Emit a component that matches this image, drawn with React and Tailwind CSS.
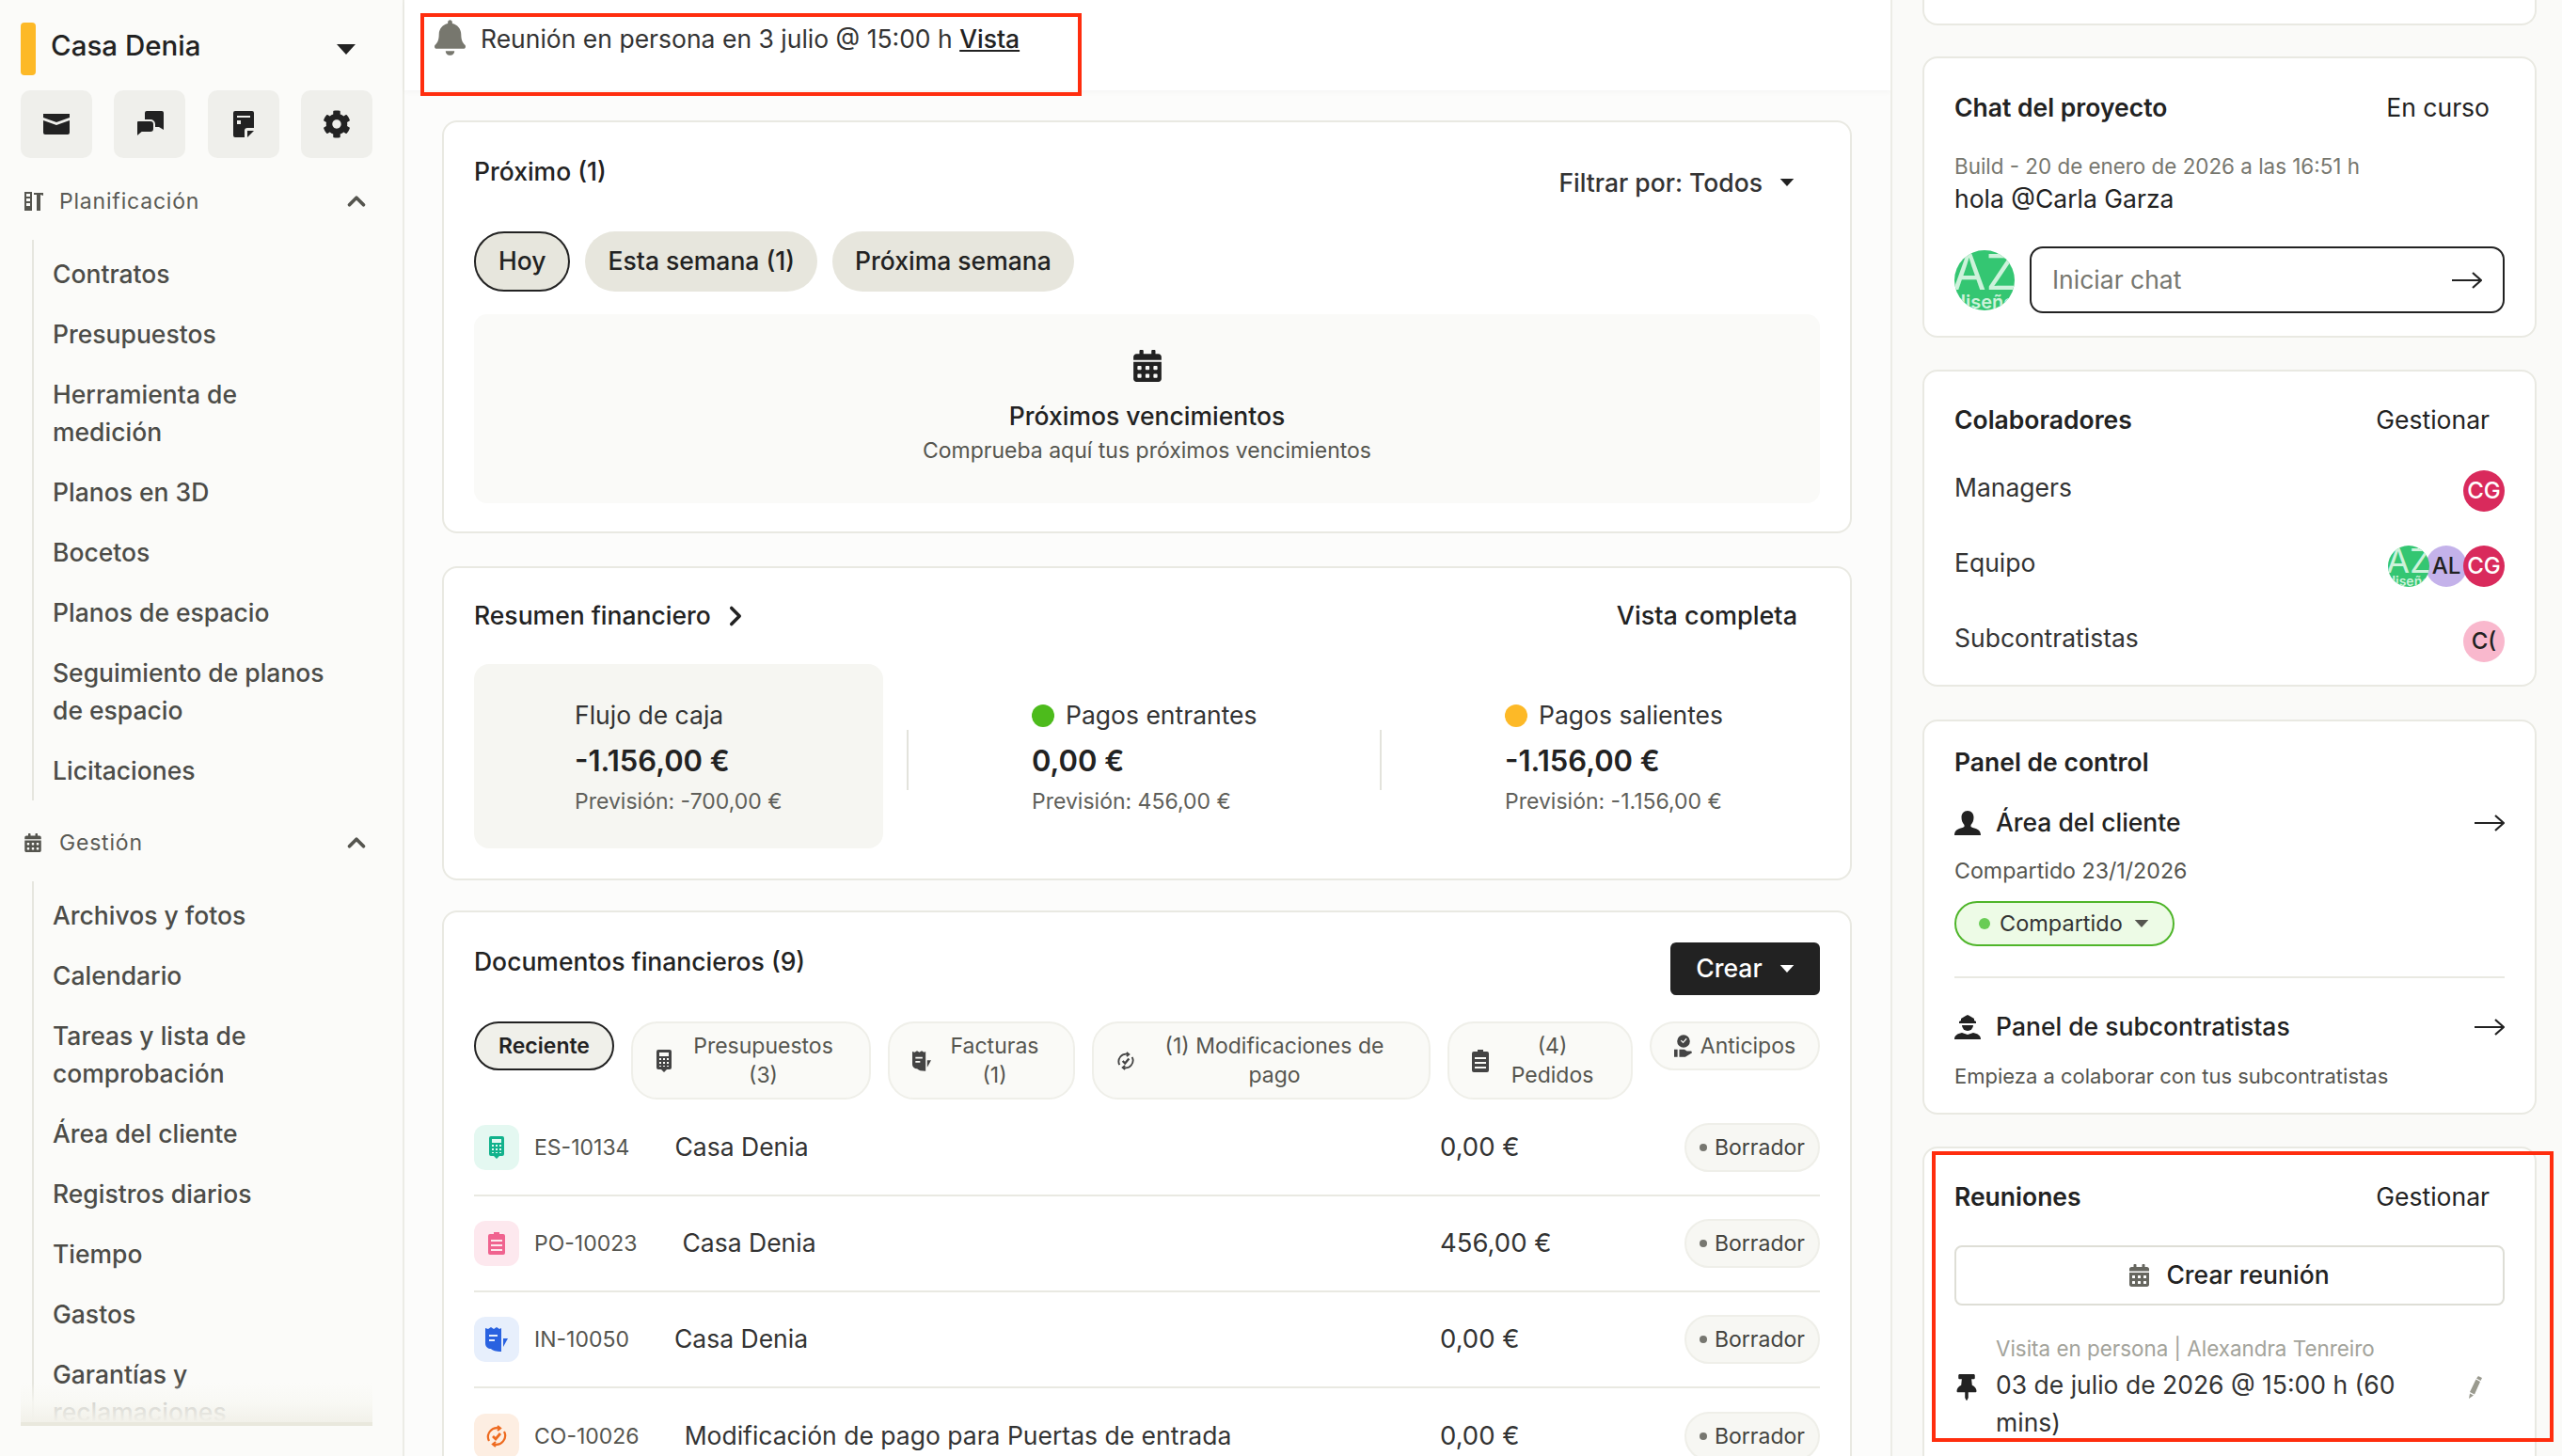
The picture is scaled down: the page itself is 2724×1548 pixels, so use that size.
import React from "react";
import { FaCog, FaBell, FaCalendarAlt, FaThumbtack } from "react-icons/fa";
import { ChevronUp, ChevronRight } from "lucide-react";

const Tri = ({ className = "" }) => (
  <svg viewBox="0 0 20 11" className={className} fill="currentColor"><path d="M0 0h20L10 11z" /></svg>
);

const Envelope = () => (
  <svg viewBox="0 0 28 22" className="w-[28px] h-[22px]" fill="#222">
    <path d="M0 0h28v4L14 9 0 4z" />
    <path d="M0 7l14 5 14-5v13a2 2 0 0 1-2 2H2a2 2 0 0 1-2-2z" />
  </svg>
);
const Chats = () => (
  <svg viewBox="0 0 29 28" className="w-[29px] h-[28px]">
    <path fill="#222" d="M9 2a2 2 0 0 1 2-2h16a2 2 0 0 1 2 2v18l-5-3H11a2 2 0 0 1-2-2z" />
    <path fill="#222" stroke="#efefeb" strokeWidth="2" d="M0 12a2 2 0 0 1 2-2h13a4 4 0 0 1 4 4v5a4 4 0 0 1-4 4H6l-6 5z" />
  </svg>
);
const Note = () => (
  <svg viewBox="0 0 22 28" className="w-[22px] h-[28px]" fill="#222">
    <path fillRule="evenodd" d="M2 0h18a2 2 0 0 1 2 2v16h-7a3 3 0 0 0-3 3v7H2a2 2 0 0 1-2-2V2a2 2 0 0 1 2-2zM4 5v2h14V5zM4 10v4h4v-4z" />
    <path d="M15 21h7l-7 7z" />
  </svg>
);
const PlanIcon = () => (
  <svg viewBox="0 0 20 20" className="w-[20px] h-[20px]" fill="#55554f">
    <path fillRule="evenodd" d="M0 0h8v20H0zM2 2v3h4V2zM2 7v3h4V7zM2 12v3h4v-3z" />
    <path d="M10 1h10v3l-3-1v17h-4V3h-3z" />
  </svg>
);
const CalcIcon = ({ c }) => (
  <svg viewBox="0 0 16 24" className="w-[18px] h-[24px]" fill={c}>
    <path fillRule="evenodd" d="M2 0h12a2 2 0 0 1 2 2v17a2 2 0 0 1-2 2h-3l-3 3-3-3H2a2 2 0 0 1-2-2V2a2 2 0 0 1 2-2zM3 3v4h10V3zM3 9v2h2V9zM7 9v2h2V9zM11 9v2h2V9zM3 13v2h2v-2zM7 13v2h2v-2zM11 13v2h2v-2zM3 17v1h2v-1zM7 17v1h2v-1zM11 17v1h2v-1z" />
  </svg>
);
const ClipIcon = ({ c }) => (
  <svg viewBox="0 0 18 24" className="w-[18px] h-[24px]" fill={c}>
    <path fillRule="evenodd" d="M6 0h6v2h4a2 2 0 0 1 2 2v18a2 2 0 0 1-2 2H2a2 2 0 0 1-2-2V4a2 2 0 0 1 2-2h4zM3 8v2h12V8zM3 13v2h12v-2zM3 18v2h12v-2z" />
  </svg>
);
const InvoiceIcon = ({ c, cls = "w-[24px] h-[26px]" }) => (
  <svg viewBox="0 0 24 26" className={cls} fill={c}>
    <path fillRule="evenodd" d="M0 1l3 1 3-2 3 2 3-2 3 2 2-1v25c-6 0-9-1-11-3-3 0-6-2-6-6zM4 8v2h9V8zM4 13v2h6v-2z" />
    <path d="M19 12h5l-5 9z" />
  </svg>
);
const CycleIcon = ({ c, cls = "w-[24px] h-[24px]" }) => (
  <svg viewBox="0 0 24 24" className={cls} fill="none" stroke={c} strokeWidth="2.2">
    <path d="M4 17a9.500 9.500 0 0 1 11-13.500" />
    <path d="M20 7a9.500 9.500 0 0 1-11 13.500" />
    <path d="M13 1l3 2.500-3 2.500M11 18l-3 2.500 3 2.500" />
    <path d="M8 12l3 3 5-6" strokeWidth="2.800" />
  </svg>
);
const HandIcon = ({ c }) => (
  <svg viewBox="0 0 22 26" className="w-[20px] h-[24px]" fill={c}>
    <path fillRule="evenodd" d="M11 0a7.500 7.500 0 1 1 0 15 7.500 7.500 0 0 1 0-15zM7.500 7l3 3 4.500-5-1-1-3.500 4-2-2z" />
    <path d="M0 17h4v9H0zM6 17h6l3 2h5l1 2-8 5H6z" />
  </svg>
);
const PersonIcon = () => (
  <svg viewBox="0 0 28 26" className="w-[28px] h-[26px]" fill="#222">
    <path d="M14 0c4 0 6.500 3 6.500 7 0 3-1 6-3 8v2l2 1c5 1 8.500 3 8.500 8H0c0-5 3.500-7 8.500-8l2-1v-2c-2-2-3-5-3-8 0-4 2.500-7 6.500-7z" />
  </svg>
);
const WorkerIcon = () => (
  <svg viewBox="0 0 28 26" className="w-[28px] h-[26px]" fill="#222">
    <path d="M14 0l2 1 5 3v2l2 1v2H5V7l2-1V4l5-3z" />
    <path d="M8 11h12a6 6 0 0 1-12 0z" />
    <path d="M0 26c0-4 3-6 8-7l6 2 6-2c5 1 8 3 8 7z" />
  </svg>
);
const Pencil = () => (
  <svg viewBox="0 0 14 24" className="w-[14px] h-[24px] mr-[24px] shrink-0" fill="#9a9a8f">
    <path d="M10 0l4 2-1.500 3L8 2.500zM7.500 3.500L12 6 6 19.500 1 17zM1 18.500l4 2L0 24z" />
  </svg>
);

const Avatar = ({ bg, color = "text-white", text, extra = "" }) => (
  <div className={`w-[44px] h-[44px] rounded-full flex items-center justify-center shrink-0 overflow-hidden font-medium text-[24px] ${bg} ${color} ${extra}`}>{text}</div>
);
const AZ = ({ big }) => (
  <div className={`relative rounded-full bg-[#34c672] overflow-hidden shrink-0 text-[#cdf2db] ${big ? "w-[64px] h-[64px]" : "w-[44px] h-[44px]"}`}>
    <span className={`absolute left-1/2 -translate-x-1/2 text-center font-normal whitespace-nowrap ${big ? "top-[-4px] text-[52px] leading-[56px]" : "top-[-3px] text-[36px] leading-[38px]"}`}>AZ</span>
    <span className={`absolute left-1/2 -translate-x-1/2 text-center font-semibold whitespace-nowrap ${big ? "top-[44px] text-[20px] leading-[22px]" : "top-[30px] text-[14px] leading-[15px]"}`}>diseño</span>
  </div>
);

const Card = ({ className = "", children }) => (
  <div className={`bg-white border-2 border-[#e9e9e2] rounded-[16px] ${className}`}>{children}</div>
);

const NavItem = ({ children }) => (
  <div className="py-3 text-[26.500px] leading-[40px] font-medium text-[#4c4c48] pr-[36px]">{children}</div>
);
const NavGroup = ({ icon, label, items, mt }) => (
  <div>
    <div className={`flex items-center h-[40px] ${mt}`}>
      <span className="w-[20px] ml-[4px] flex items-center">{icon}</span>
      <span className="ml-[17px] text-[23px] tracking-[0.8px] text-[#5a5a55] flex-1">{label}</span>
      <ChevronUp className="w-[30px] h-[30px] text-[#55554f] mr-[2px]" strokeWidth={3} />
    </div>
    <div className="mt-[21px] ml-3 border-l-2 border-[#e6e6df] pl-5 pt-[4px]">
      {items.map((t) => <NavItem key={t}>{t}</NavItem>)}
    </div>
  </div>
);

const Sidebar = () => (
  <aside className="w-[430px] shrink-0 h-full border-r-2 border-[#ecece6] bg-[#fbfbf9] pl-[22px] pr-[32px] pt-6 pb-[32px] flex flex-col">
    <div className="flex items-center h-[56px]">
      <div className="w-[16px] h-[56px] rounded-[4px] bg-[#fdb927]" />
      <div className="ml-4 flex-1 text-[29.500px] leading-[48px] font-medium text-[#222] self-start">Casa Denia</div>
      <Tri className="w-[20px] h-[11px] text-[#222] mr-[18px]" />
    </div>
    <div className="flex justify-between mt-4">
      {[<Envelope key="e" />, <Chats key="c" />, <Note key="n" />, <FaCog key="g" className="w-[30px] h-[30px] text-[#222]" />].map((ic, i) => (
        <div key={i} className="w-[76px] h-[72px] rounded-[10px] bg-[#efefeb] flex items-center justify-center">{ic}</div>
      ))}
    </div>
    <div className="relative flex-1 overflow-hidden">
      <NavGroup mt="mt-[26px]" icon={<PlanIcon />} label="Planificación" items={["Contratos", "Presupuestos", "Herramienta de medición", "Planos en 3D", "Bocetos", "Planos de espacio", "Seguimiento de planos de espacio", "Licitaciones"]} />
      <NavGroup mt="mt-[25px]" icon={<FaCalendarAlt className="w-[18px] h-[20px] text-[#55554f]" />} label="Gestión" items={["Archivos y fotos", "Calendario", "Tareas y lista de comprobación", "Área del cliente", "Registros diarios", "Tiempo", "Gastos", "Garantías y reclamaciones"]} />
      <div className="absolute left-0 right-0 bottom-0 h-[46px] border-b-4 border-[#e9e8dd] bg-gradient-to-b from-[#fbfbf9]/0 via-[#f8f8f3]/80 to-[#f2f1ea]" />
    </div>
  </aside>
);

const Pill = ({ active, children }) => (
  <div className={`h-[64px] px-[24px] rounded-full bg-[#e7e6dd] flex items-center text-[26.500px] font-medium text-[#222] ${active ? "border-2 border-[#222]" : ""}`}>{children}</div>
);
const Tab = ({ w, icon, children, h = "h-[83px]" }) => (
  <div className={`${w} ${h} border-2 border-[#efefe9] bg-[#fafaf7] text-[#55554f] pl-[24px] pr-[16px] rounded-[28px] flex items-center text-[23px] leading-[31px] text-center shrink-0`}>
    <span className="shrink-0 flex">{icon}</span>
    <span className="flex-1">{children}</span>
  </div>
);
const Stat = ({ dot, label, value, prev }) => (
  <div>
    <div className="flex items-center h-[36px] text-[26.500px] text-[#333]">
      {dot && <span className={`w-[24px] h-[24px] rounded-full mr-3 ${dot}`} />}
      {label}
    </div>
    <div className="mt-[10px] h-[40px] leading-[40px] text-[31px] font-semibold text-[#222]">{value}</div>
    <div className="mt-[7px] h-[32px] leading-[32px] text-[23px] text-[#5f5f5a]">{prev}</div>
  </div>
);
const Row = ({ tone, icon, code, name, amount, last }) => (
  <div className={`flex items-center h-[102px] shrink-0 ${last ? "" : "border-b-2 border-[#e9e9e2]"}`}>
    <div className={`w-[48px] h-[48px] rounded-[12px] flex items-center justify-center ${tone}`}>{icon}</div>
    <div className="ml-4 text-[23px] text-[#55554f]">{code}</div>
    <div className="ml-12 flex-1 text-[26.500px] text-[#333]">{name}</div>
    <div className="w-[260px] text-[27.500px] text-[#333]">{amount}</div>
    <div className="w-[144px] h-[52px] rounded-full border-2 border-[#efefe9] bg-[#f7f7f3] flex items-center justify-center text-[23px] text-[#44443f]">
      <span className="w-[8px] h-[8px] rounded-full bg-[#777770] mr-[8px]" />Borrador
    </div>
  </div>
);

const Main = () => (
  <main className="flex-1 min-w-0 h-full bg-[#fcfcfb] relative">
    <div className="h-[96px] bg-white shadow-[0_2px_6px_rgba(0,0,0,0.03)] flex items-start pl-[32px] pt-[21px]">
      <FaBell className="w-[33px] h-[38px] text-[#77776e]" />
      <div className="ml-[16px] text-[26.500px] leading-[40px] text-[#333] whitespace-nowrap">
        Reunión en persona en 3 julio @ 15:00 h <span className="underline font-medium text-[#222]">Vista</span>
      </div>
    </div>
    <div className="absolute left-[17px] top-[14px] w-[703px] h-[88px] border-4 border-[#ff2d0e]" />
    <div className="pl-[40px] pr-[41px] pt-[32px]">
      <Card className="px-[32px] pb-[30px]">
        <div className="flex items-start h-[116px] pt-[32px]">
          <div className="flex-1 text-[26.500px] leading-[40px] font-medium text-[#222]">Próximo (1)</div>
          <div className="mt-3 text-[26.500px] leading-[40px] font-medium text-[#333] flex items-center mr-[27px]">
            Filtrar por: Todos
            <Tri className="w-[16px] h-[8px] ml-[18px] text-[#222]" />
          </div>
        </div>
        <div className="flex gap-4">
          <Pill active>Hoy</Pill><Pill>Esta semana (1)</Pill><Pill>Próxima semana</Pill>
        </div>
        <div className="mt-[24px] h-[201px] rounded-[14px] bg-[#fafaf8] flex flex-col items-center pt-[38px]">
          <FaCalendarAlt className="w-[30px] h-[34px] text-[#222]" />
          <div className="mt-[16px] text-[26.500px] leading-[40px] font-medium text-[#222]">Próximos vencimientos</div>
          <div className="text-[23px] leading-[34px] text-[#55554f]">Comprueba aquí tus próximos vencimientos</div>
        </div>
      </Card>
      <Card className="mt-[35px] px-[32px] pb-[32px]">
        <div className="flex items-center justify-between mt-[31px] h-[40px]">
          <div className="flex items-center text-[26.500px] font-medium text-[#222]">
            Resumen financiero <ChevronRight className="w-[34px] h-[34px] ml-[9px] text-[#222]" strokeWidth={2.5} />
          </div>
          <div className="text-[27px] font-medium text-[#222] mr-[24px]">Vista completa</div>
        </div>
        <div className="flex items-center mt-[31px] h-[196px]">
          <div className="w-[435px] h-full rounded-[16px] bg-[#f6f6f2] pl-[107px] pt-[37px]">
            <Stat label="Flujo de caja" value="-1.156,00 €" prev="Previsión: -700,00 €" />
          </div>
          <div className="ml-[25px] w-[2px] h-[64px] bg-[#e3e3dc] mt-[8px]" />
          <div className="w-[501px] pl-[131px] mt-[2px]">
            <Stat dot="bg-[#4dbb1c]" label="Pagos entrantes" value="0,00 €" prev="Previsión: 456,00 €" />
          </div>
          <div className="w-[2px] h-[64px] bg-[#e3e3dc] mt-[8px]" />
          <div className="pl-[131px] mt-[2px]">
            <Stat dot="bg-[#fdb927]" label="Pagos salientes" value="-1.156,00 €" prev="Previsión: -1.156,00 €" />
          </div>
        </div>
      </Card>
      <Card className="mt-[32px] px-[32px] pb-[20px]">
        <div className="flex items-start justify-between mt-[32px]">
          <div className="text-[26.500px] leading-[40px] font-medium text-[#222]">Documentos financieros (9)</div>
          <div className="w-[159px] h-[56px] rounded-[6px] bg-[#222] text-white flex items-center justify-center text-[26.500px] font-medium">
            Crear <Tri className="w-[16px] h-[8px] ml-[18px] text-white" />
          </div>
        </div>
        <div className="flex justify-between items-start mt-[28px] h-[84px]">
          <div className="w-[149px] h-[52px] shrink-0 border-2 border-[#222] bg-[#f0f0ea] rounded-[28px] flex items-center justify-center text-[23px] font-semibold text-[#222]">Reciente</div>
          <Tab w="w-[255px]" icon={<CalcIcon c="#444" />}>Presupuestos<br />(3)</Tab>
          <Tab w="w-[199px]" icon={<InvoiceIcon c="#444" cls="w-[20px] h-[22px]" />}>Facturas<br />(1)</Tab>
          <Tab w="w-[360px]" icon={<CycleIcon c="#444" cls="w-[20px] h-[22px]" />}>(1) Modificaciones de<br />pago</Tab>
          <Tab w="w-[197px]" icon={<ClipIcon c="#444" />}>(4)<br />Pedidos</Tab>
          <Tab w="w-[181px]" h="h-[52px]" icon={<HandIcon c="#444" />}>Anticipos</Tab>
        </div>
        <Row tone="bg-[#e4f8f1]" icon={<CalcIcon c="#12b28c" />} code="ES-10134" name="Casa Denia" amount="0,00 €" />
        <Row tone="bg-[#fde8ee]" icon={<ClipIcon c="#f0638f" />} code="PO-10023" name="Casa Denia" amount="456,00 €" />
        <Row tone="bg-[#e7effc]" icon={<InvoiceIcon c="#2a62e0" />} code="IN-10050" name="Casa Denia" amount="0,00 €" />
        <Row tone="bg-[#fdeee2]" icon={<CycleIcon c="#ee6a1f" />} code="CO-10026" name="Modificación de pago para Puertas de entrada" amount="0,00 €" last />
      </Card>
    </div>
  </main>
);

const Arrow = () => (
  <svg viewBox="0 0 32 20" className="w-[32px] h-[20px] shrink-0" fill="none" stroke="#222" strokeWidth="2.200">
    <path d="M0 10h31M22 2l9 8-9 8" />
  </svg>
);

const Right = () => (
  <aside className="w-[714px] shrink-0 h-full border-l-2 border-[#ecece6] bg-[#fafaf8] pl-[32px] pr-[27px] relative">
    <div className="h-[27px] bg-white border-x-2 border-b-2 border-[#e9e9e2] rounded-b-[16px]" />
    <Card className="mt-[33px] px-[32px] pb-[24px]">
      <div className="mt-[32px] flex justify-between text-[26.500px] leading-[40px] text-[#222]">
        <span className="font-semibold">Chat del proyecto</span><span className="mr-[16px]">En curso</span>
      </div>
      <div className="mt-[26px] text-[22.400px] leading-[34px] text-[#77776f]">Build - 20 de enero de 2026 a las 16:51 h</div>
      <div className="text-[26.500px] leading-[34px] text-[#222]">hola @Carla Garza</div>
      <div className="mt-[34px] flex items-center">
        <AZ big />
        <div className="ml-[16px] flex-1 h-[71px] border-2 border-[#222] rounded-[14px] flex items-center pl-[22px] pr-[22px] justify-between">
          <span className="text-[26.500px] text-[#77776f]">Iniciar chat</span>
          <Arrow />
        </div>
      </div>
    </Card>
    <Card className="mt-[34px] px-[32px] pb-[24px]">
      <div className="mt-[31px] flex justify-between text-[26.500px] leading-[40px] text-[#222]">
        <span className="font-semibold">Colaboradores</span><span className="mr-[16px]">Gestionar</span>
      </div>
      <div className="mt-[34px] flex justify-between items-start h-[44px]">
        <span className="text-[26.500px] leading-[36px] text-[#333]">Managers</span>
        <Avatar bg="bg-[#d92a5c]" text="CG" />
      </div>
      <div className="mt-[36px] flex justify-between items-start h-[44px]">
        <span className="text-[26.500px] leading-[36px] text-[#333]">Equipo</span>
        <div className="flex -space-x-[4px]">
          <AZ />
          <Avatar bg="bg-[#c4b2ea]" color="text-[#222]" text="AL" />
          <Avatar bg="bg-[#d92a5c]" text="CG" />
        </div>
      </div>
      <div className="mt-[36px] flex justify-between items-start h-[44px]">
        <span className="text-[26.500px] leading-[36px] text-[#333]">Subcontratistas</span>
        <Avatar bg="bg-[#f9b8cd]" color="text-[#222]" text="C(" />
      </div>
    </Card>
    <Card className="mt-[35px] px-[32px] pb-[23px]">
      <div className="mt-[23px] text-[26.500px] leading-[40px] font-semibold text-[#222]">Panel de control</div>
      <div className="mt-[25px] flex items-center h-[40px]">
        <PersonIcon />
        <span className="ml-[16px] flex-1 text-[26.500px] font-medium text-[#222]">Área del cliente</span>
        <Arrow />
      </div>
      <div className="mt-[15px] text-[23.200px] leading-[32px] text-[#55554f]">Compartido 23/1/2026</div>
      <div className="mt-[16px] w-[234px] h-[48px] rounded-full border-2 border-[#4fb52a] bg-[#edfbe6] flex items-center pl-[24px] text-[23.500px] text-[#333]">
        <span className="w-[12px] h-[12px] rounded-full bg-[#69cc55] mr-[10px]" />Compartido
        <Tri className="w-[16px] h-[8px] ml-[12px] text-[#55554f]" />
      </div>
      <div className="mt-[32px] h-[2px] bg-[#e9e9e2]" />
      <div className="mt-[32px] flex items-center h-[40px]">
        <WorkerIcon />
        <span className="ml-[16px] flex-1 text-[26.500px] font-medium text-[#222]">Panel de subcontratistas</span>
        <Arrow />
      </div>
      <div className="mt-[16px] text-[22px] leading-[32px] text-[#55554f]">Empieza a colaborar con tus subcontratistas</div>
    </Card>
    <Card className="mt-[34px] px-[32px] h-[400px]">
      <div className="mt-[31px] flex justify-between text-[26.500px] leading-[40px] text-[#222]">
        <span className="font-semibold">Reuniones</span><span className="mr-[16px]">Gestionar</span>
      </div>
      <div className="mt-[32px] h-[64px] border-2 border-[#deded6] rounded-[8px] flex items-center justify-center text-[26.500px] font-medium text-[#222]">
        <FaCalendarAlt className="w-[21px] h-[24px] text-[#66665f] mr-[18px]" />Crear reunión
      </div>
      <div className="mt-[30px] flex items-center">
        <FaThumbtack className="w-[22px] h-[28px] text-[#222] ml-[2px] mr-[20px] shrink-0" />
        <div className="flex-1">
          <div className="text-[22.400px] leading-[32px] text-[#a3a39b]">Visita en persona | Alexandra Tenreiro</div>
          <div className="mt-[2px] text-[26.500px] leading-[40px] text-[#333] w-[460px]">03 de julio de 2026 @ 15:00 h (60 mins)</div>
        </div>
        <Pencil />
      </div>
    </Card>
    <div className="absolute left-[42px] top-[1224px] w-[661px] h-[309px] border-4 border-[#ff2d0e]" />
  </aside>
);

export default function App() {
  return (
    <div className="w-[2724px] h-[1548px] overflow-hidden flex [font-family:Inter,sans-serif] bg-white">
      <Sidebar />
      <Main />
      <Right />
    </div>
  );
}
